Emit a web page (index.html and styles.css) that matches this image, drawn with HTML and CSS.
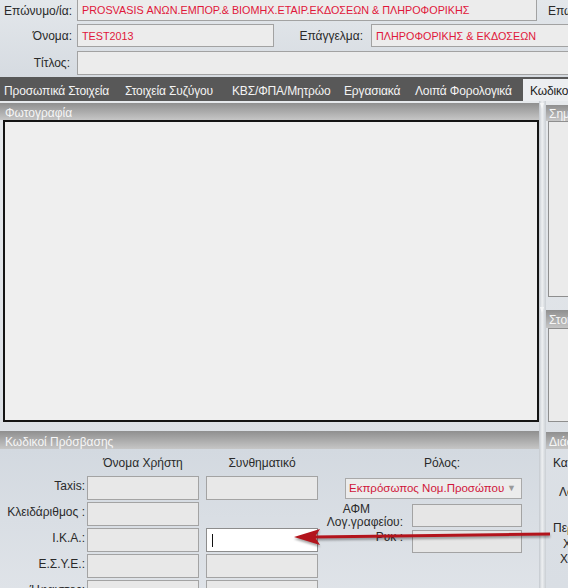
FILE: index.html
```html
<!DOCTYPE html>
<html lang="el">
<head>
<meta charset="utf-8">
<title>Στοιχεία</title>
<link rel="stylesheet" href="styles.css">
</head>
<body>
<div class="page">
  <div class="top">
    <div class="frow r1">
      <span class="lbl lw">Επώνυμο/ία:</span>
      <div class="inp red w1 notop">PROSVASIS ΑΝΩΝ.ΕΜΠΟΡ.&amp; ΒΙΟΜΗΧ.ΕΤΑΙΡ.ΕΚΔΟΣΕΩΝ &amp; ΠΛΗΡΟΦΟΡΙΚΗΣ</div>
      <span class="lbl side">Επωνυμία</span>
    </div>
    <div class="frow r2">
      <span class="lbl lw">Όνομα:</span>
      <div class="inp red w2">TEST2013</div>
      <span class="lbl lw2">Επάγγελμα:</span>
      <div class="inp red w3">ΠΛΗΡΟΦΟΡΙΚΗΣ &amp; ΕΚΔΟΣΕΩΝ</div>
    </div>
    <div class="frow r3">
      <span class="lbl lw lw-t">Τίτλος:</span>
      <div class="inp w4"></div>
    </div>
  </div>

  <div class="tabs">
    <span class="tab">Προσωπικά Στοιχεία</span>
    <span class="tab">Στοιχεία Συζύγου</span>
    <span class="tab">ΚΒΣ/ΦΠΑ/Μητρώο</span>
    <span class="tab">Εργασιακά</span>
    <span class="tab">Λοιπά Φορολογικά</span>
    <span class="tab active">Κωδικοί Πρόσβασης</span>
  </div>

  <div class="main">
    <div class="leftcol">
      <div class="phead">Φωτογραφία</div>
      <div class="photo"></div>

      <div class="phead chead">Κωδικοί Πρόσβασης</div>
      <div class="codes">
        <span></span>
        <span class="colh">Όνομα Χρήστη</span>
        <span class="colh">Συνθηματικό</span>
        <span class="colh roleh">Ρόλος:</span>

        <span class="clbl">Taxis:</span>
        <div class="cin"></div>
        <div class="cin"></div>
        <div class="sel"><span>Εκπρόσωπος Νομ.Προσώπου</span><span class="caret">▼</span></div>

        <span class="clbl">Κλειδάριθμος :</span>
        <div class="cin"></div>
        <span></span>
        <div class="rrow">
          <span class="rlbl two"><span class="afm">ΑΦΜ</span>Λογ.γραφείου:</span>
          <div class="rin"></div>
        </div>

        <span class="clbl">Ι.Κ.Α.:</span>
        <div class="cin"></div>
        <div class="cin focus"><span class="cursor"></span></div>
        <div class="rrow">
          <span class="rlbl">Ρυκ :</span>
          <div class="rin"></div>
        </div>

        <span class="clbl">Ε.Σ.Υ.Ε.:</span>
        <div class="cin"></div>
        <div class="cin"></div>
        <span></span>

        <span class="clbl">Ήφαιστος:</span>
        <div class="cin"></div>
        <div class="cin"></div>
        <span></span>
      </div>
    </div>

    <div class="splitter"><span class="notch"></span><span class="notch n2"></span></div>

    <div class="rightcol">
      <div class="phead rh1">Σημειώσεις</div>
      <div class="rbox b1"></div>
      <div class="phead rh2">Στοιχεία</div>
      <div class="rbox b2"></div>
      <div class="phead rh3">Διάφορα</div>
      <div class="rtexts">
        <span class="t1">Κατηγορία</span>
        <span class="t2">Λογιστής</span>
        <span class="t3">Περιοχή</span>
        <span class="t4">Χώρα</span>
        <span class="t5">Χρήστης</span>
      </div>
    </div>

    <svg class="arrow" width="262" height="22" viewBox="0 0 262 22">
      <line x1="258" y1="8" x2="22" y2="11" stroke="#b3141c" stroke-width="3"/>
      <polygon points="2,11 28,3 23,11 28,19" fill="#b3141c"/>
    </svg>
  </div>
</div>
</body>
</html>
```

FILE: styles.css
```css
* { box-sizing: border-box; }
html, body { margin: 0; padding: 0; }
body {
  width: 568px;
  height: 588px;
  overflow: hidden;
  font-family: "Liberation Sans", Arial, sans-serif;
  font-size: 12px;
  color: #262626;
  background: #dde1e6;
}
.page { width: 568px; height: 588px; overflow: hidden; position: relative; }

/* top form */
.top {
  height: 77px;
  background: linear-gradient(#e3e7eb, #d6dbe1);
  overflow: hidden;
}
.frow { display: flex; align-items: center; white-space: nowrap; }
.r1 { height: 21px; }
.r2 { height: 23px; margin-top: 3px; }
.r3 { height: 24px; margin-top: 4px; }
.lbl { color: #2a2a2a; }
.lw { width: 72px; text-align: right; margin-right: 5px; flex: none; }
.lw-t { padding-right: 2px; }
.lw2 { width: 89px; text-align: right; margin-right: 8px; flex: none; }
.side { margin-left: 11px; }
.inp {
  height: 100%;
  background: #ececec;
  border: 1px solid #a2a2a2;
  padding: 0 4px;
  display: flex;
  align-items: center;
  flex: none;
  overflow: hidden;
  font-size: 10.8px;
}
.notop { border-top: none; }
.red { color: #e0173a; }
.w1 { width: 460px; }
.w2 { width: 197px; }
.w3 { width: 210px; }
.w4 { width: 500px; }

/* tabs */
.tabs {
  height: 24px;
  padding-top: 2px;
  background: #585858;
  display: grid;
  grid-template-columns: 121px 107px 112px 71px 108px 1fr;
  align-items: stretch;
  white-space: nowrap;
  overflow: hidden;
}
.tab { color: #f4f4f4; padding-left: 4px; padding-top: 1px; display: flex; align-items: center; letter-spacing: -0.15px; }
.tab.active {
  margin-left: 4px;
  padding-left: 7px;
  background: #eceef1;
  color: #222;
}

/* main */
.main {
  display: flex;
  height: 487px;
  position: relative;
  background: linear-gradient(#e6e9ec, #dde1e6 60%, #d9dee4);
}
.leftcol { width: 539px; flex: none; padding-top: 2px; }
.phead {
  height: 17px;
  background: linear-gradient(#8f8f8f, #c6c6c6);
  color: #f6f6f6;
  padding-left: 5px;
  padding-top: 3px;
  display: flex;
  align-items: center;
  white-space: nowrap;
  overflow: hidden;
}
.photo {
  margin-left: 3px;
  height: 302px;
  border: 2px solid #141414;
  background: #efefef;
}
.chead { margin-top: 9px; height: 18px; }

.codes {
  height: 140px;
  background: linear-gradient(#d3d9e0, #dfe3e8);
  display: grid;
  grid-template-columns: 87px 119px 112px 1fr;
  grid-template-rows: 25px repeat(5, 24px);
  row-gap: 2px;
}
.colh { align-self: end; text-align: center; padding-bottom: 4px; color: #2a2a2a; }
.codes .colh:nth-child(2) { width: 112px; }
.roleh { padding-left: 27px; }
.clbl { text-align: right; padding-right: 2px; padding-top: 3px; align-self: start; white-space: nowrap; color: #2a2a2a; }
.cin {
  width: 112px;
  height: 24px;
  background: #e8e8e8;
  border: 1px solid #a3a3a3;
}
.cin.focus { background: #fff; border-color: #8d8d8d; position: relative; }
.cursor { position: absolute; left: 5px; top: 5px; width: 1px; height: 13px; background: #111; }
.sel {
  margin-left: 27px;
  width: 177px;
  height: 21px;
  align-self: center;
  border: 1px solid #a9a9a9;
  background: #ececec;
  color: #d0163a;
  display: flex;
  align-items: center;
  justify-content: space-between;
  padding: 0 5px 0 3px;
  white-space: nowrap;
  font-size: 11.5px;
}
.caret { color: #9a9a9a; font-size: 9px; }
.rrow { display: flex; align-items: flex-start; margin-top: 2px; }
.rlbl { width: 85px; text-align: right; margin-right: 9px; flex: none; color: #2a2a2a; line-height: 14px; white-space: nowrap; }
.rlbl.two { display: flex; flex-direction: column; align-items: flex-end; line-height: 13px; margin-top: -1px; }
.afm { padding-right: 33px; }
.rin { width: 110px; height: 23px; background: #e6e6e6; border: 1px solid #a3a3a3; }

/* splitter */
.splitter {
  width: 7px;
  flex: none;
  position: relative;
  background: linear-gradient(90deg, #c3c8ce, #eef0f2 45%, #c9ced3);
}
.notch {
  position: absolute;
  left: 1px;
  top: 2px;
  width: 0;
  height: 0;
  border-left: 2.5px solid transparent;
  border-right: 2.5px solid transparent;
  border-top: 6px solid #f6f7f8;
}
.notch.n2 { top: 206px; }

/* right column */
.rightcol { width: 22px; flex: none; overflow: hidden; padding-top: 4px; }
.rightcol .phead { width: 80px; height: 16px; padding-left: 3px; padding-top: 2px; }
.rbox { margin-left: 2px; width: 60px; border: 1px solid #8e8e8e; background: #ebebeb; }
.b1 { height: 176px; }
.rh2 { margin-top: 13px; height: 18px !important; }
.b2 { height: 94px; }
.rh3 { margin-top: 10px; height: 17px !important; }
.rtexts { position: relative; height: 140px; white-space: nowrap; }
.rtexts span { display: block; }
.t1 { margin-left: 7px; margin-top: 7px; }
.t2 { margin-left: 13px; margin-top: 15px; }
.t3 { margin-left: 7px; margin-top: 22px; }
.t4 { margin-left: 17px; margin-top: 2px; }
.t5 { margin-left: 14px; margin-top: 1px; }

/* annotation arrow */
.arrow {
  position: absolute;
  left: 292px;
  top: 425px;
  filter: drop-shadow(0 2px 1px rgba(0,0,0,0.35));
}
```
